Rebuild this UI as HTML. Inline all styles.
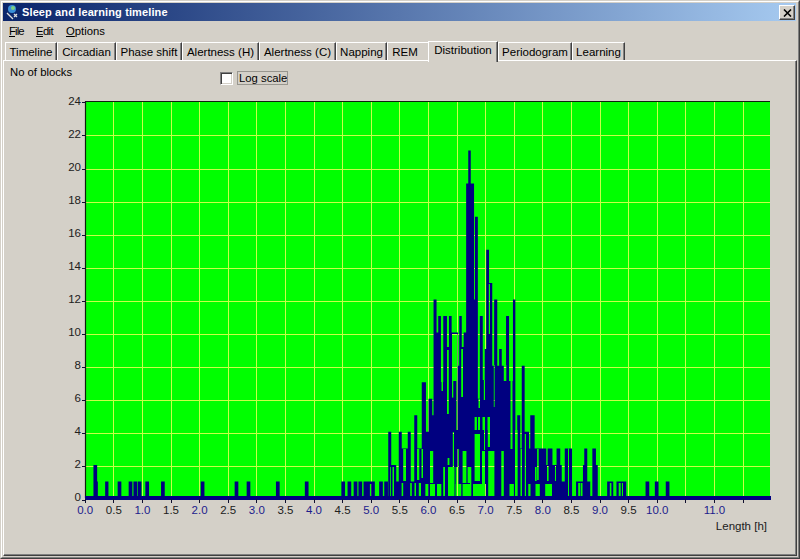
<!DOCTYPE html>
<html><head><meta charset="utf-8"><style>
*{margin:0;padding:0;box-sizing:border-box}
html,body{width:800px;height:559px;overflow:hidden;background:#d4d0c8;font-family:"Liberation Sans",sans-serif;font-size:11.3px;color:#000}
.abs{position:absolute}
#frame{position:absolute;left:0;top:0;width:800px;height:559px;border-top:1px solid #d4d0c8;border-left:1px solid #d4d0c8;border-right:1px solid #404040;border-bottom:1px solid #404040}
#frame2{position:absolute;left:1px;top:1px;width:798px;height:557px;border-top:1px solid #fff;border-left:1px solid #fff;border-right:1px solid #808080;border-bottom:1px solid #808080}
#title{position:absolute;left:3px;top:3px;width:793px;height:18px;background:linear-gradient(to right,#0a246a,#a6caf0)}
#title .t{position:absolute;left:19px;top:3px;font-weight:bold;font-size:11px;color:#fff;white-space:nowrap;letter-spacing:0.12px}
#close{position:absolute;left:776px;top:2px;width:16px;height:15px;background:#d4d0c8;border-top:1px solid #fff;border-left:1px solid #fff;border-right:1px solid #404040;border-bottom:1px solid #404040;box-shadow:inset -1px -1px 0 #808080}
.menu{position:absolute;top:25px;white-space:nowrap}
.menu u{text-decoration:underline}
.tab{position:absolute;top:42px;height:18px;border-top:1px solid #fff;border-left:1px solid #fff;border-right:1px solid #404040;box-shadow:inset -1px 0 0 #808080;text-align:center;font-size:11.5px;line-height:16px;padding-top:1px;white-space:nowrap}
.tab.sel{top:41px;height:21px;padding-top:0px;background:#d4d0c8;z-index:2}
#panel{position:absolute;left:3px;top:60px;width:794px;height:496px;border-top:1px solid #fff;border-left:1px solid #fff;border-right:1px solid #404040;border-bottom:1px solid #404040;box-shadow:inset -1px -1px 0 #808080}
#chk{position:absolute;left:220px;top:72px;width:13px;height:13px;background:#fff;border-top:1px solid #808080;border-left:1px solid #808080;border-right:1px solid #fff;border-bottom:1px solid #fff;box-shadow:inset 1px 1px 0 #404040,inset -1px -1px 0 #d4d0c8}
#lbl{position:absolute;left:237px;top:71px;width:51px;height:14px;outline:1px solid #98968f;outline-offset:-1px;padding-left:2px;padding-top:1px;white-space:nowrap}
.chart{position:absolute;left:0;top:0}
</style></head><body>
<div id="frame"></div><div id="frame2"></div>
<div id="title"><svg class="abs" style="left:2px;top:1px" width="16" height="16" viewBox="0 0 16 16">
<circle cx="7" cy="5" r="4" fill="#3a8fd8"/><circle cx="8" cy="4" r="2" fill="#7fd07f"/><path d="M2 9L8 15M9 10l3 3M12 10l-3 3" stroke="#e0e0e0" stroke-width="1.3"/></svg>
<div class="t">Sleep and learning timeline</div>
<div id="close"><svg class="abs" style="left:3px;top:3px" width="9" height="8" viewBox="0 0 9 8"><path d="M1 0.5L8 7.5M8 0.5L1 7.5" stroke="#000" stroke-width="1.6"/></svg></div>
</div>
<div class="menu" style="left:9px;letter-spacing:-0.9px"><u>F</u>ile</div>
<div class="menu" style="left:36px;letter-spacing:-0.6px"><u>E</u>dit</div>
<div class="menu" style="left:66px"><u>O</u>ptions</div>
<div id="panel"></div>
<div class="tab" style="left:5px;width:52px">Timeline</div><div class="tab" style="left:57px;width:59px">Circadian</div><div class="tab" style="left:116px;width:66px">Phase shift</div><div class="tab" style="left:182px;width:77px">Alertness (H)</div><div class="tab" style="left:259px;width:77px">Alertness (C)</div><div class="tab" style="left:336px;width:51px">Napping</div><div class="tab" style="left:387px;width:42px;padding-right:7px;border-right:none;box-shadow:none">REM</div><div class="tab" style="left:498px;width:74px">Periodogram</div><div class="tab" style="left:572px;width:53px">Learning</div><div class="tab sel" style="left:428px;width:70px">Distribution</div>
<div class="abs" style="left:10px;top:66px;white-space:nowrap">No of blocks</div>
<div id="chk"></div>
<div id="lbl">Log scale</div>
<svg class="chart" width="800" height="559" viewBox="0 0 800 559">
<defs><mask id="m"><rect x="0" y="0" width="800" height="559" fill="#fff"/><g fill="#000"><rect x="369.9" y="484" width="1.3" height="12"/><rect x="390.2" y="467" width="0.8" height="29"/><rect x="392.5" y="467" width="1.5" height="29"/><rect x="403.2" y="449" width="2.8" height="32"/><rect x="417" y="449" width="2.3" height="31"/><rect x="421.5" y="449" width="1.5" height="29"/><rect x="425.6" y="484" width="2.5" height="12"/><rect x="401.6" y="483" width="1.6" height="13"/><rect x="410.2" y="483" width="1.6" height="13"/><rect x="414.5" y="483" width="1.5" height="13"/><rect x="418.8" y="483" width="2.2" height="13"/><rect x="441.5" y="382" width="1.5" height="9"/><rect x="447" y="350" width="1.8" height="64"/><rect x="452" y="334" width="5.6" height="47"/><rect x="452" y="381" width="1.3" height="16.6"/><rect x="456.3" y="381" width="1.3" height="49"/><rect x="461.2" y="349" width="1.8" height="48"/><rect x="478.5" y="399" width="1.5" height="9"/><rect x="478" y="417" width="2" height="13"/><rect x="474.6" y="417" width="2.3" height="13"/><rect x="474.6" y="434" width="5.4" height="47"/><rect x="470" y="467" width="1.3" height="29"/><rect x="483.8" y="380" width="1.2" height="20"/><rect x="482.5" y="417" width="2.5" height="13"/><rect x="484" y="430" width="1" height="20"/><rect x="482" y="451" width="3" height="33"/><rect x="488.8" y="284" width="1.2" height="50"/><rect x="487.5" y="417" width="2.5" height="13"/><rect x="487.8" y="430" width="2.2" height="17"/><rect x="488.2" y="451" width="6.2" height="45"/><rect x="493.8" y="365" width="0.8" height="42"/><rect x="503.8" y="365" width="2.5" height="16"/><rect x="501.3" y="451" width="2.5" height="45"/><rect x="510.5" y="381" width="2" height="68"/><rect x="509.5" y="484" width="4.4" height="12"/><rect x="515.3" y="432" width="2" height="64"/><rect x="520.5" y="449" width="1.5" height="47"/><rect x="524.8" y="434" width="1.2" height="62"/><rect x="537.1" y="449" width="1.6" height="31"/><rect x="535" y="467" width="1.6" height="14"/><rect x="547" y="466" width="1.6" height="15"/><rect x="555" y="466" width="1" height="15"/><rect x="568" y="449" width="1" height="47"/><rect x="528.3" y="484" width="2.2" height="12"/><rect x="535.5" y="484" width="4.3" height="12"/><rect x="545.2" y="484" width="6.8" height="12"/><rect x="578.2" y="483" width="1.8" height="13"/><rect x="580.6" y="483" width="1.9" height="13"/><rect x="609.8" y="483" width="1.6" height="13"/><rect x="618.7" y="483" width="2" height="13"/><rect x="621.9" y="483" width="1.1" height="13"/><rect x="420" y="484" width="1" height="12"/><rect x="425.6" y="484" width="2.5" height="12"/><rect x="430" y="451" width="3.2" height="32"/><rect x="430" y="484" width="5" height="12"/><rect x="437" y="484" width="4.3" height="12"/><rect x="443.2" y="467" width="1.8" height="29"/><rect x="447.6" y="458" width="1.8" height="7"/><rect x="448" y="467" width="6.5" height="29"/><rect x="452.8" y="432" width="1.2" height="35"/><rect x="455.7" y="467" width="2.8" height="29"/><rect x="455.7" y="484" width="5.6" height="12"/><rect x="457.5" y="449" width="1.3" height="18"/><rect x="462.6" y="451" width="3.8" height="32"/><rect x="462.6" y="484" width="7.6" height="12"/><rect x="467.6" y="467" width="2.4" height="16"/><rect x="473" y="484" width="12.9" height="12"/><rect x="482" y="451" width="3" height="33"/><rect x="515" y="430" width="2.5" height="66"/></g></mask></defs>
<rect x="85" y="101" width="685" height="397" fill="#00ff00"/>
<path d="M113.5 102V497M142.5 102V497M171.5 102V497M199.5 102V497M228.5 102V497M256.5 102V497M285.5 102V497M314.5 102V497M342.5 102V497M371.5 102V497M399.5 102V497M428.5 102V497M457.5 102V497M485.5 102V497M514.5 102V497M542.5 102V497M571.5 102V497M600.5 102V497M628.5 102V497M657.5 102V497M685.5 102V497M714.5 102V497M743.5 102V497M86 466.5H770M86 433.5H770M86 400.5H770M86 367.5H770M86 334.5H770M86 301.5H770M86 268.5H770M86 235.5H770M86 202.5H770M86 169.5H770M86 135.5H770" stroke="#c8ff48" stroke-width="1" fill="none"/>
<path d="M85.5 101V498M85 101.5H770" stroke="#102010" stroke-width="1.2" fill="none"/>
<path d="M93.45 464.95H97.15V496H93.45ZM96.25 481.5H97.85V496H96.25ZM105.15 481.5H108.45V496H105.15ZM117.65 481.5H121.35V496H117.65ZM128.65 481.5H132.35V496H128.65ZM133.45 481.5H137.15V496H133.45ZM137.75 481.5H141.45V496H137.75ZM145.35 481.5H149.05V496H145.35ZM161.05 481.5H164.75V496H161.05ZM200.75 481.5H204.45V496H200.75ZM234.65 481.5H238.35V496H234.65ZM246.65 481.5H250.35V496H246.65ZM275.95 481.5H279.65V496H275.95ZM304.85 481.5H308.55V496H304.85ZM341.35 481.5H345.05V496H341.35ZM347.55 481.5H351.25V496H347.55ZM353.65 481.5H357.35V496H353.65ZM358.45 481.5H362.15V496H358.45ZM379.15 481.5H382.85V496H379.15ZM384.25 481.5H387.95V496H384.25ZM363.55 481.5H374.85V496H363.55ZM388.25 431.85H391.25V496H388.25ZM390.25 464.95H396.25V496H390.25ZM395.75 481.5H399.25V496H395.75ZM398.75 431.85H401.75V496H398.75ZM401.25 448.4H408.25V496H401.25ZM407.75 431.85H410.75V496H407.75ZM410.25 481.5H414.75V496H410.25ZM414.25 415.3H417.25V496H414.25ZM416.75 448.4H422.25V496H416.75ZM421.75 382.2H425.95V496H421.75ZM425.45 431.85H429.05V496H425.45ZM428.55 398.75H432.25V496H428.55ZM431.75 415.3H434.05V496H431.75ZM433.55 299.45H436.55V496H433.55ZM436.05 332.55H438.75V496H436.05ZM438.25 316H440.95V496H438.25ZM440.45 382H443.75V496H440.45ZM443.25 316H446.95V496H443.25ZM446.45 347H449.45V496H446.45ZM448.95 316H451.65V496H448.95ZM451.15 332.55H458.05V496H451.15ZM457.35 365.65H459.75V496H457.35ZM459.25 316H461.75V496H459.25ZM461.15 347H464.15V496H461.15ZM463.65 332.55H466.65V496H463.65ZM466.15 183.6H468.75V496H466.15ZM468.25 150.5H470.75V496H468.25ZM470.25 183.6H474.05V496H470.25ZM473.55 299.45H475.45V496H473.55ZM474.95 216.7H477.85V496H474.95ZM477.35 398.75H480.35V496H477.35ZM479.85 316H482.75V496H479.85ZM482.25 380H485.25V496H482.25ZM484.75 349.1H486.75V496H484.75ZM486.25 249.8H489.05V496H486.25ZM488.55 282.9H492.25V496H488.55ZM491.75 365.65H494.65V496H491.75ZM494.15 299.45H497.25V496H494.15ZM496.75 365.65H499.65V496H496.75ZM499.15 349.1H501.75V496H499.15ZM501.25 365.65H506.55V496H501.25ZM506.05 316H509.05V496H506.05ZM508.55 381H513.45V496H508.55ZM512.95 299.45H515.35V496H512.95ZM514.85 431.85H517.75V496H514.85ZM517.25 415.3H520.25V496H517.25ZM519.75 448.4H522.25V496H519.75ZM521.75 365.65H524.65V496H521.75ZM524.15 431.85H526.55V496H524.15ZM526.05 431.85H529.05V496H526.05ZM528.55 448.4H530.75V496H528.55ZM530.25 415.3H534.65V496H530.25ZM534.15 448.4H546.25V496H534.15ZM545.75 464.95H548.15V496H545.75ZM547.65 448.4H552.45V496H547.65ZM551.95 464.95H557.05V496H551.95ZM556.55 448.4H560.25V496H556.55ZM559.75 464.95H561.75V496H559.75ZM561.25 481.5H565.25V496H561.25ZM564.75 448.4H568.25V496H564.75ZM568.75 448.4H572.05V496H568.75ZM576.05 481.5H583.45V496H576.05ZM582.95 464.95H584.75V496H582.95ZM584.25 448.4H587.25V496H584.25ZM586.75 481.5H590.25V496H586.75ZM592.35 448.4H595.95V496H592.35ZM595.45 464.95H597.75V496H595.45ZM607.15 481.5H613.25V496H607.15ZM616.45 481.5H626.25V496H616.45ZM645.55 481.5H649.25V496H645.55ZM654.85 481.5H658.55V496H654.85ZM665.75 481.5H669.45V496H665.75Z" fill="#000080" mask="url(#m)"/>
<rect x="85" y="496" width="686" height="4" fill="#000080"/>
<path d="M85.5 499V503M113.5 499V503M142.5 499V503M171.5 499V503M199.5 499V503M228.5 499V503M256.5 499V503M285.5 499V503M314.5 499V503M342.5 499V503M371.5 499V503M399.5 499V503M428.5 499V503M457.5 499V503M485.5 499V503M514.5 499V503M542.5 499V503M571.5 499V503M600.5 499V503M628.5 499V503M657.5 499V503M685.5 499V503M714.5 499V503M743.5 499V503M82 500.5H86M82 466.5H86M82 433.5H86M82 400.5H86M82 367.5H86M82 334.5H86M82 301.5H86M82 268.5H86M82 235.5H86M82 202.5H86M82 169.5H86M82 135.5H86M82 102.5H86" stroke="#101030" stroke-width="1" fill="none"/>
<g font-family="Liberation Sans" font-size="11.5px" fill="#202020"><text x="81" y="500.9" text-anchor="end">0</text><text x="81" y="467.9" text-anchor="end">2</text><text x="81" y="434.9" text-anchor="end">4</text><text x="81" y="401.9" text-anchor="end">6</text><text x="81" y="368.9" text-anchor="end">8</text><text x="81" y="335.9" text-anchor="end">10</text><text x="81" y="302.9" text-anchor="end">12</text><text x="81" y="269.9" text-anchor="end">14</text><text x="81" y="236.9" text-anchor="end">16</text><text x="81" y="203.9" text-anchor="end">18</text><text x="81" y="170.9" text-anchor="end">20</text><text x="81" y="137.9" text-anchor="end">22</text><text x="81" y="104.9" text-anchor="end">24</text></g>
<g font-family="Liberation Sans" font-size="11.5px"><text x="85.2" y="514" text-anchor="middle" fill="#1c1c8c">0.0</text><text x="113.8" y="514" text-anchor="middle" fill="#202020">0.5</text><text x="142.4" y="514" text-anchor="middle" fill="#1c1c8c">1.0</text><text x="171" y="514" text-anchor="middle" fill="#202020">1.5</text><text x="199.6" y="514" text-anchor="middle" fill="#1c1c8c">2.0</text><text x="228.2" y="514" text-anchor="middle" fill="#202020">2.5</text><text x="256.8" y="514" text-anchor="middle" fill="#1c1c8c">3.0</text><text x="285.4" y="514" text-anchor="middle" fill="#202020">3.5</text><text x="314" y="514" text-anchor="middle" fill="#1c1c8c">4.0</text><text x="342.6" y="514" text-anchor="middle" fill="#202020">4.5</text><text x="371.2" y="514" text-anchor="middle" fill="#1c1c8c">5.0</text><text x="399.8" y="514" text-anchor="middle" fill="#202020">5.5</text><text x="428.4" y="514" text-anchor="middle" fill="#1c1c8c">6.0</text><text x="457" y="514" text-anchor="middle" fill="#202020">6.5</text><text x="485.6" y="514" text-anchor="middle" fill="#1c1c8c">7.0</text><text x="514.2" y="514" text-anchor="middle" fill="#202020">7.5</text><text x="542.8" y="514" text-anchor="middle" fill="#1c1c8c">8.0</text><text x="571.4" y="514" text-anchor="middle" fill="#202020">8.5</text><text x="600" y="514" text-anchor="middle" fill="#1c1c8c">9.0</text><text x="628.6" y="514" text-anchor="middle" fill="#202020">9.5</text><text x="657.2" y="514" text-anchor="middle" fill="#1c1c8c">10.0</text><text x="714.4" y="514" text-anchor="middle" fill="#1c1c8c">11.0</text></g>
<text x="767" y="530" text-anchor="end" font-family="Liberation Sans" font-size="11.5px" fill="#202020">Length [h]</text>
</svg>
</body></html>
